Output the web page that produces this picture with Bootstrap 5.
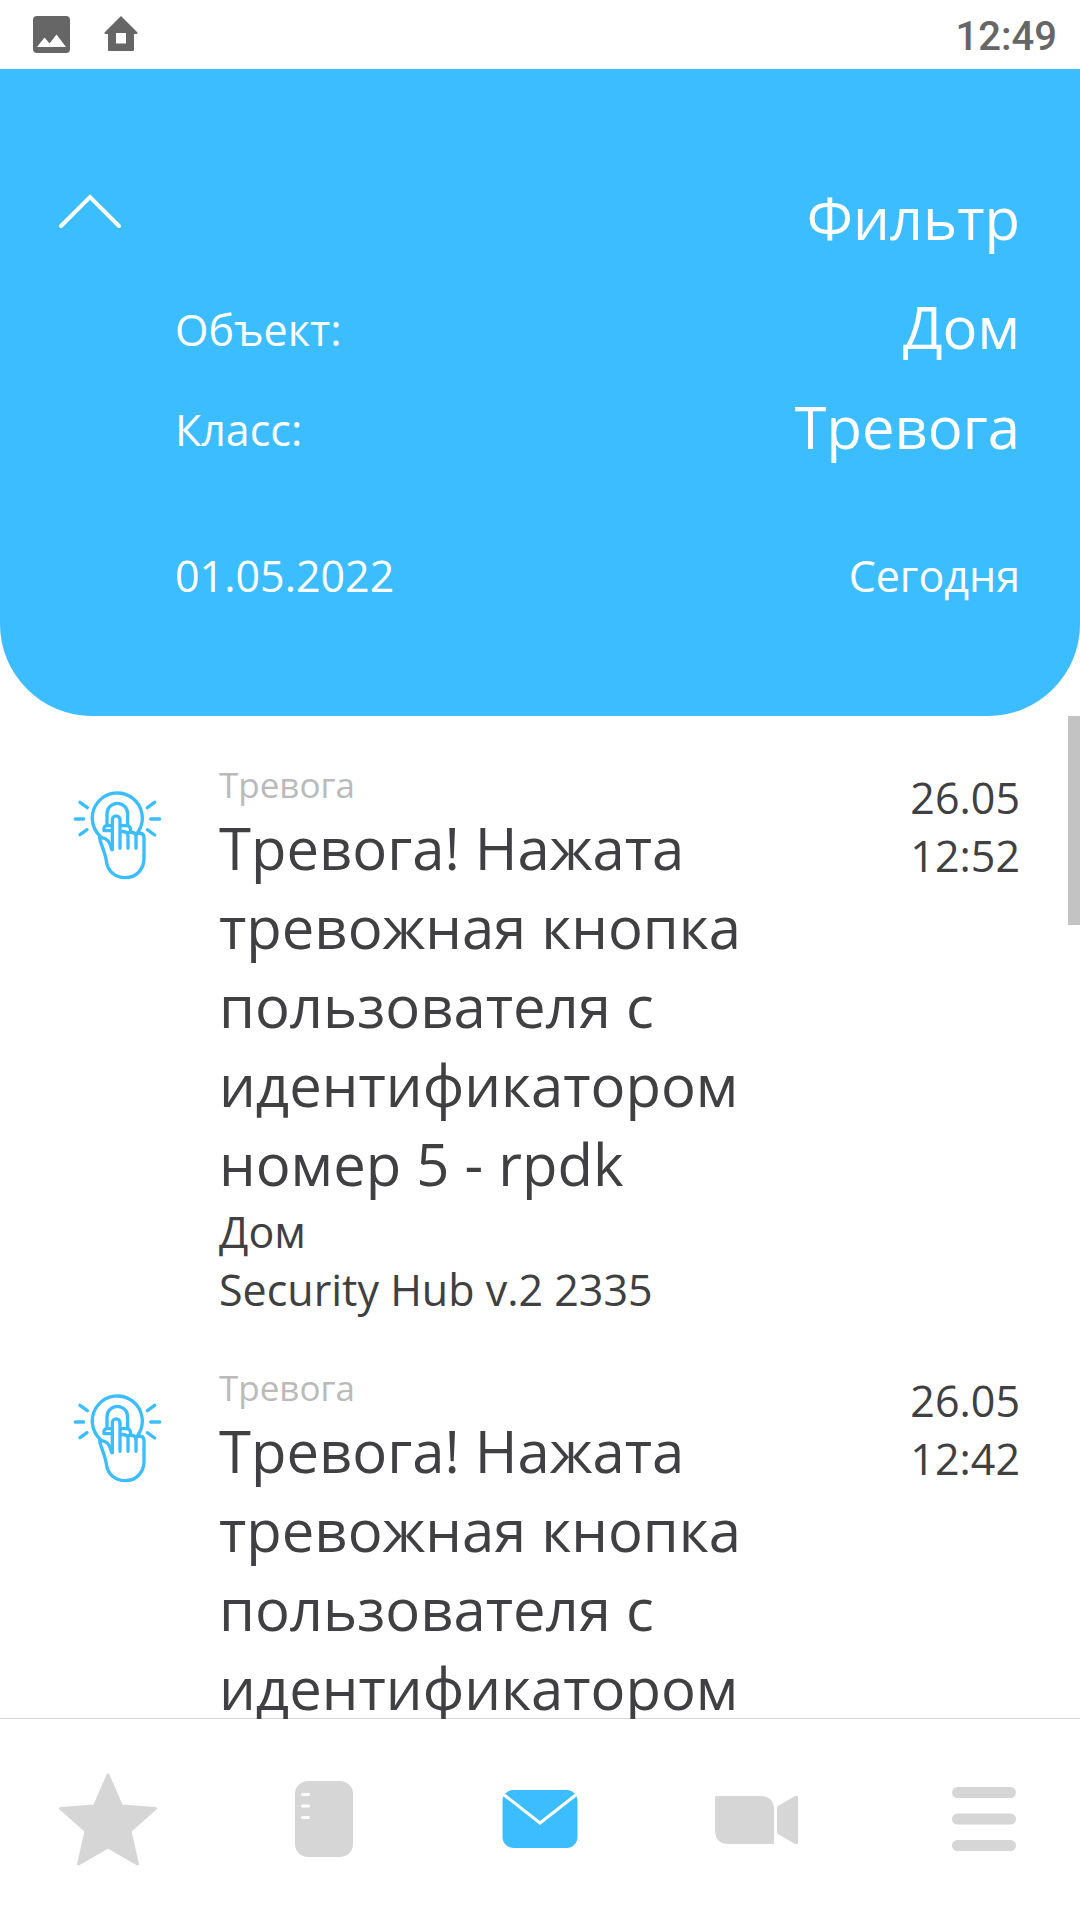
<!DOCTYPE html>
<html lang="ru">
<head>
<meta charset="utf-8">
<meta name="viewport" content="width=device-width, initial-scale=1">
<title>События</title>
<link href="https://cdn.jsdelivr.net/npm/bootstrap@5.3.0/dist/css/bootstrap.min.css" rel="stylesheet">
<style>
  body { font-family: "Open Sans", "Noto Sans", sans-serif; color: #404042; background: #fff; }
  .status-bar { height: 69px; padding: 0 23px 0 33px; color: #666; background: #fff; }
  .status-icons { gap: 34px; }
  .status-time { font: 500 40px/58px Roboto, sans-serif; padding-top: 4px; }
  .filter-panel { background: #3cbdff; color: #fff; padding: 109px 60px 111px 58px; border-radius: 0 0 92px 92px; }
  .filter-fields { padding-left: 117px; }
  .row-object { padding-top: 30px; }
  .row-class { padding-top: 21px; }
  .row-dates { padding-top: 80px; }
  .txt-lg { font-size: 58px; line-height: 79px; }
  .txt-md { font-size: 43px; line-height: 59px; }
  .txt-sm { font-size: 35px; line-height: 46px; color: #bababa; }
  .txt-detail { font-size: 43px; line-height: 58px; }
  .field-label { padding-top: 6px; }
  .plain-btn { background: none; border: 0; padding: 0; color: inherit; }
  .event-area { min-height: 0; z-index: 1; }
  .event-list { min-width: 0; scrollbar-width: none; }
  .event-list::-webkit-scrollbar { display: none; }
  .event-item { padding: 46px 48px 0 73px; }
  .event-icon { width: 146px; padding-top: 29px; }
  .event-body { max-width: 600px; }
  .event-when { padding-top: 7px; }
  .scroll-rail { width: 12px; }
  .scroll-thumb { height: 209px; background: #c3c3c3; }
  .tab-bar { height: 202px; margin-top: -1px; border-top: 1px solid #d6d6d6; color: #d6d6d6; }
  .tab-bar a { color: inherit; }
  .tab-bar a.active { color: #3cbdff; }
</style>
<script src="https://cdn.jsdelivr.net/npm/bootstrap@5.3.0/dist/js/bootstrap.bundle.min.js" defer></script>
</head>
<body class="vh-100 d-flex flex-column overflow-hidden">

<svg class="d-none" aria-hidden="true">
  <symbol id="panic-press" viewBox="99 90 270 270">
    <g fill="none" stroke="#3cbdff" stroke-width="10" stroke-linecap="round" stroke-linejoin="round">
      <path d="M182 227A75 75 0 1 1 294 213"/>
      <path d="M120 124L142 140M106 174H131M120 221L141 206M344 124L322 140M332 174H359M322 206L344 222"/>
      <path d="M201 192V158A31 31 0 0 1 263 158V192"/>
      <path d="M217 209H192Q190 194 201 194H217M242 194H262Q271 195 272 209"/>
      <path d="M217 266V176A11.500 11.500 0 0 1 240 176V262"/>
      <path d="M264 262V222Q261 209 241 212M288 262V224Q286 212 266 214"/>
      <path d="M215 266C211 244 199 228 179 230C180 246 196 274 199 300C203 332 226 350 256 350C288 350 312 326 312 292V230Q311 216 298 216Q289 216 288 224"/>
    </g>
  </symbol>
</svg>

<div class="status-bar d-flex align-items-center justify-content-between flex-shrink-0">
  <div class="status-icons d-flex align-items-center">
    <svg width="37" height="37" viewBox="0 0 37 37" aria-hidden="true">
      <rect width="37" height="37" rx="4" fill="currentColor"/>
      <path d="M4 31L11.500 21.500L16.500 27.500L23.500 18.500L33 31Z" fill="#fff"/>
    </svg>
    <svg width="34" height="37" viewBox="0 0 34 37" aria-hidden="true">
      <path d="M17 0L33.500 16.500Q34 18 32 18H30V34Q30 35 29 35H5Q4 35 4 34V18H2Q0 18 .5 16.500ZM12 17V27.500H22V17Z" fill="currentColor" fill-rule="evenodd"/>
    </svg>
  </div>
  <time class="status-time">12:49</time>
</div>

<header class="filter-panel flex-shrink-0">
  <div class="d-flex align-items-start justify-content-between">
    <button class="plain-btn d-flex" type="button" aria-label="Свернуть фильтр">
      <svg width="64" height="54" viewBox="0 0 64 54" aria-hidden="true"><path d="M3 48L32 19L61 48" fill="none" stroke="#fff" stroke-width="4" stroke-linecap="round"/></svg>
    </button>
    <h1 class="txt-lg fw-normal m-0">Фильтр</h1>
  </div>
  <div class="filter-fields">
    <div class="row-object d-flex align-items-center justify-content-between">
      <span class="txt-md field-label" id="lbl-object">Объект:</span>
      <button class="plain-btn txt-lg" type="button" aria-describedby="lbl-object">Дом</button>
    </div>
    <div class="row-class d-flex align-items-center justify-content-between">
      <span class="txt-md field-label" id="lbl-class">Класс:</span>
      <button class="plain-btn txt-lg" type="button" aria-describedby="lbl-class">Тревога</button>
    </div>
    <div class="row-dates d-flex align-items-center justify-content-between">
      <button class="plain-btn txt-md" type="button">01.05.2022</button>
      <button class="plain-btn txt-md" type="button">Сегодня</button>
    </div>
  </div>
</header>

<main class="event-area position-relative d-flex flex-fill">
  <div class="event-list flex-fill overflow-auto">
    <article class="event-item d-flex">
      <div class="event-icon flex-shrink-0"><svg width="90" height="90" aria-hidden="true"><use href="#panic-press"/></svg></div>
      <div class="event-body">
        <div class="txt-sm">Тревога</div>
        <h2 class="txt-lg fw-normal m-0">Тревога! Нажата тревожная кнопка пользователя с идентификатором номер 5 - rpdk</h2>
        <div class="txt-detail">Дом</div>
        <div class="txt-detail">Security Hub v.2 2335</div>
      </div>
      <div class="event-when txt-detail text-end ms-auto">26.05<br>12:52</div>
    </article>
    <article class="event-item d-flex">
      <div class="event-icon flex-shrink-0"><svg width="90" height="90" aria-hidden="true"><use href="#panic-press"/></svg></div>
      <div class="event-body">
        <div class="txt-sm">Тревога</div>
        <h2 class="txt-lg fw-normal m-0">Тревога! Нажата тревожная кнопка пользователя с идентификатором номер 5 - rpdk</h2>
        <div class="txt-detail">Дом</div>
        <div class="txt-detail">Security Hub v.2 2335</div>
      </div>
      <div class="event-when txt-detail text-end ms-auto">26.05<br>12:42</div>
    </article>
  </div>
  <div class="scroll-rail flex-shrink-0"><div class="scroll-thumb"></div></div>
</main>

<nav class="tab-bar flex-shrink-0 d-flex" aria-label="Разделы">
  <a class="d-flex flex-fill align-items-center justify-content-center" href="#favorites" aria-label="Избранное">
    <svg width="120" height="120" viewBox="0 0 120 120" aria-hidden="true"><path d="M60 15L73.500 46L107.500 48.500L82 71L89.500 104L60 87L30.500 104L38 71L12.500 48.500L46.500 46Z" fill="currentColor" stroke="currentColor" stroke-width="3" stroke-linejoin="round"/></svg>
  </a>
  <a class="d-flex flex-fill align-items-center justify-content-center" href="#journal" aria-label="Журнал">
    <svg width="120" height="120" viewBox="0 0 120 120" aria-hidden="true"><rect x="31" y="21" width="58" height="76" rx="13" fill="currentColor"/><path d="M38.500 34.500H44.500M38.500 46H44.500M38.500 57.500H44.500" stroke="#fff" stroke-width="3" stroke-linecap="round"/></svg>
  </a>
  <a class="active d-flex flex-fill align-items-center justify-content-center" href="#events" aria-label="События" aria-current="page">
    <svg width="120" height="120" viewBox="0 0 120 120" aria-hidden="true"><rect x="22.500" y="30" width="75" height="58" rx="11" fill="currentColor"/><path d="M23 34L60 63L97 34" fill="none" stroke="#fff" stroke-width="3"/></svg>
  </a>
  <a class="d-flex flex-fill align-items-center justify-content-center" href="#cameras" aria-label="Камеры">
    <svg width="120" height="120" viewBox="0 0 120 120" aria-hidden="true"><path d="M20.500 36H64Q78 36 78 50V82.500Q78 84 76.500 84H33Q19 84 19 70V37.500Q19 36 20.500 36ZM81 48Q81 47 82 46L99 36Q102 35 102 37.500V82.500Q102 85 99 84L82 74Q81 73 81 72Z" fill="currentColor"/></svg>
  </a>
  <a class="d-flex flex-fill align-items-center justify-content-center" href="#menu" aria-label="Меню">
    <svg width="120" height="120" viewBox="0 0 120 120" aria-hidden="true"><path d="M45.500 32.500H98.500M45.500 59H98.500M45.500 85.500H98.500" stroke="currentColor" stroke-width="11" stroke-linecap="round"/></svg>
  </a>
</nav>

</body>
</html>
